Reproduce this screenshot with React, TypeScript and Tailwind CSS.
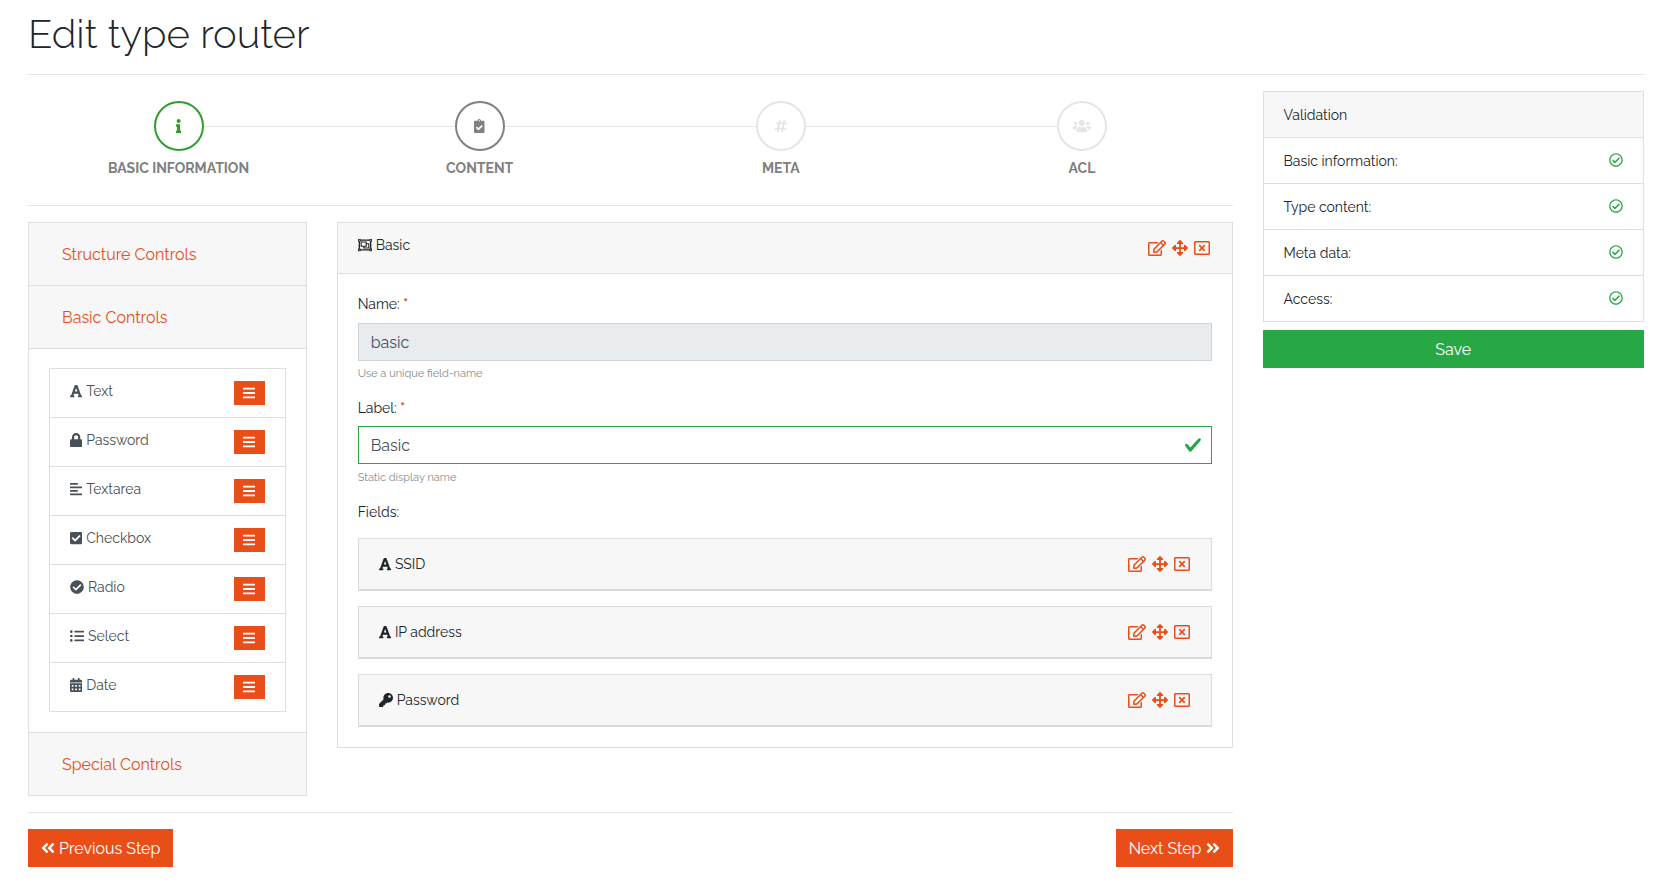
import React from "react";
import type { IconType } from "react-icons";
import {
  FaAlignLeft,
  FaAngleDoubleLeft,
  FaAngleDoubleRight,
  FaArrowsAlt,
  FaBars,
  FaCalendarAlt,
  FaCheckCircle,
  FaCheckSquare,
  FaClipboardCheck,
  FaFont,
  FaHashtag,
  FaInfo,
  FaKey,
  FaListUl,
  FaLock,
  FaRegCheckCircle,
  FaRegEdit,
  FaRegObjectGroup,
  FaRegWindowClose,
  FaUsers,
} from "react-icons/fa";

const steps: { label: string; icon: IconType; tone: string }[] = [
  { label: "Basic information", icon: FaInfo, tone: "border-[#2f9e2f] text-[#2f9e2f]" },
  { label: "Content", icon: FaClipboardCheck, tone: "border-[#808080] text-[#808080]" },
  { label: "Meta", icon: FaHashtag, tone: "border-[#e5e5e5] text-[#e5e5e5]" },
  { label: "ACL", icon: FaUsers, tone: "border-[#e5e5e5] text-[#e5e5e5]" },
];

const basicControls: { label: string; icon: IconType }[] = [
  { label: "Text", icon: FaFont },
  { label: "Password", icon: FaLock },
  { label: "Textarea", icon: FaAlignLeft },
  { label: "Checkbox", icon: FaCheckSquare },
  { label: "Radio", icon: FaCheckCircle },
  { label: "Select", icon: FaListUl },
  { label: "Date", icon: FaCalendarAlt },
];

const fields: { label: string; icon: IconType }[] = [
  { label: "SSID", icon: FaFont },
  { label: "IP address", icon: FaFont },
  { label: "Password", icon: FaKey },
];

const checks = ["Basic information:", "Type content:", "Meta data:", "Access:"];

/* size="auto" leaves the view box to set the ratio, so width follows the glyph. */
function Glyph({ icon: Icon, large = false }: { icon: IconType; large?: boolean }) {
  return (
    <Icon
      size="auto"
      className={large ? "h-4 w-auto shrink-0" : "h-[14px] w-auto shrink-0"}
      aria-hidden="true"
    />
  );
}

function Actions({ name }: { name: string }) {
  return (
    <div className="flex items-center gap-[6px] text-[#e94e18]">
      <button type="button" aria-label={`Edit ${name}`}>
        <Glyph icon={FaRegEdit} large />
      </button>
      <button type="button" aria-label={`Move ${name}`}>
        <Glyph icon={FaArrowsAlt} large />
      </button>
      <button type="button" aria-label={`Remove ${name}`}>
        <Glyph icon={FaRegWindowClose} large />
      </button>
    </div>
  );
}

function AccordionHeader({ label, open = false }: { label: string; open?: boolean }) {
  return (
    <h2 className="bg-[#f7f7f7] px-5 py-3">
      <button
        type="button"
        aria-expanded={open}
        className="px-[13px] pt-2 pb-[6px] text-[16px] leading-6 text-[#e94e18]"
      >
        {label}
      </button>
    </h2>
  );
}

function Stepper() {
  return (
    <ol className="flex border-b border-[#e5e5e5] pt-[10px] pb-[27px]">
      {steps.map(({ label, icon, tone }, i) => (
        <li key={label} className="flex-1">
          <div className="flex items-center">
            <span className={i === 0 ? "h-px flex-1" : "h-px flex-1 bg-[#e5e5e5]"} />
            <button
              type="button"
              aria-label={label}
              className={`flex size-[50px] items-center justify-center rounded-full border-2 ${tone}`}
            >
              <Glyph icon={icon} />
            </button>
            <span
              className={i === steps.length - 1 ? "h-px flex-1" : "h-px flex-1 bg-[#e5e5e5]"}
            />
          </div>
          <p className="mt-[7px] text-center text-[14px] leading-5 font-bold text-[#808080] uppercase">
            {label}
          </p>
        </li>
      ))}
    </ol>
  );
}

function ControlsPanel() {
  return (
    <section className="col-span-3 self-start divide-y divide-[#dfdfdf] border border-[#dfdfdf]">
      <AccordionHeader label="Structure Controls" />
      <AccordionHeader label="Basic Controls" open />
      <div className="p-5 pt-[19px]">
        <ul className="divide-y divide-[#dfdfdf] border border-[#dfdfdf] text-[#495057]">
          {basicControls.map(({ label, icon }) => (
            <li key={label} className="flex items-start justify-between px-5 py-3">
              <span className="flex items-center gap-1 leading-5">
                <Glyph icon={icon} />
                {label}
              </span>
              <button
                type="button"
                aria-label={`Drag ${label}`}
                className="flex h-6 w-[31px] items-center justify-center bg-[#e94e18] text-white"
              >
                <Glyph icon={FaBars} />
              </button>
            </li>
          ))}
        </ul>
      </div>
      <AccordionHeader label="Special Controls" />
    </section>
  );
}

function Editor() {
  return (
    <section className="col-span-9 self-start border border-[#dfdfdf]">
      <header className="flex items-start justify-between border-b border-[#dfdfdf] bg-[#f7f7f7] py-3 pr-[22px] pl-5">
        <h2 className="flex items-center gap-1 leading-5">
          <Glyph icon={FaRegObjectGroup} />
          Basic
        </h2>
        <div className="flex h-[26px] items-center">
          <Actions name="Basic" />
        </div>
      </header>
      <div className="p-5">
        <label htmlFor="name" className="mb-2 block leading-[21px]">
          Name: <span className="font-bold text-[#e94e18]">*</span>
        </label>
        <input
          id="name"
          readOnly
          defaultValue="basic"
          className="block h-[38px] w-full border border-[#ced4da] bg-[#e9ecef] px-3 text-[16px] text-[#495057] outline-none"
        />
        <p className="mt-[5px] mb-4 text-[11px] leading-4 text-[#868e96]">
          Use a unique field-name
        </p>

        <label htmlFor="label" className="mb-[7px] block leading-[21px]">
          Label: <span className="font-bold text-[#e94e18]">*</span>
        </label>
        <div className="relative">
          <input
            id="label"
            defaultValue="Basic"
            className="block h-[38px] w-full border border-[#28a745] bg-white pr-10 pl-3 text-[16px] text-[#495057] outline-none"
          />
          <svg
            viewBox="0 0 8 8"
            className="absolute top-[10px] right-[10px] size-[18px]"
            aria-hidden="true"
          >
            <path
              fill="#28a745"
              d="M2.3 6.73L.6 4.53c-.4-1.04.46-1.4 1.1-.8l1.1 1.4 3.4-3.8c.6-.63 1.6-.27 1.2.7l-4 4.6c-.43.5-.8.4-1.1.1z"
            />
          </svg>
        </div>
        <p className="mt-[6px] mb-4 text-[11px] leading-4 text-[#868e96]">Static display name</p>

        <h3 className="mb-[15px] leading-[21px]">Fields:</h3>
        <ul className="flex flex-col gap-[15px]">
          {fields.map(({ label, icon }) => (
            <li
              key={label}
              className="flex h-[53px] items-center justify-between border border-b-2 border-[#dadada] bg-[#f7f7f7] pr-[21px] pl-5"
            >
              <span className="flex items-center gap-1 leading-5">
                <Glyph icon={icon} />
                {label}
              </span>
              <Actions name={label} />
            </li>
          ))}
        </ul>
      </div>
    </section>
  );
}

export default function App() {
  return (
    <main className="bg-white pt-[10px] pr-[27px] pb-4 pl-7 font-['Raleway','Lato',sans-serif] text-[14px] text-[#212529]">
      <h1 className="border-b border-[#e5e5e5] pb-4 text-[40px] leading-[48px] font-light">
        Edit type router
      </h1>
      <div className="mt-4 grid grid-cols-12 gap-x-[30px]">
        <div className="col-span-9">
          <Stepper />
          <div className="mt-4 grid grid-cols-12 gap-x-[30px]">
            <ControlsPanel />
            <Editor />
          </div>
          <nav className="mt-4 flex justify-between border-t border-[#e5e5e5] pt-4 text-[16px] text-white">
            <button
              type="button"
              className="flex h-[38px] items-center gap-1 bg-[#e94e18] px-[13px]"
            >
              <Glyph icon={FaAngleDoubleLeft} large />
              <span className="pt-[2px]">Previous Step</span>
            </button>
            <button
              type="button"
              className="flex h-[38px] items-center gap-1 bg-[#e94e18] px-[13px]"
            >
              <span className="pt-[2px]">Next Step</span>
              <Glyph icon={FaAngleDoubleRight} large />
            </button>
          </nav>
        </div>
        <aside className="col-span-3">
          <div className="divide-y divide-[#dfdfdf] border border-[#dfdfdf]">
            <h2 className="bg-[#f7f7f7] px-5 pt-[13px] pb-[11px] leading-[21px]">Validation</h2>
            {checks.map((label) => (
              <div
                key={label}
                className="flex items-start justify-between px-5 pt-[13px] pb-[11px]"
              >
                <span className="leading-[21px]">{label}</span>
                <span className="flex h-[18px] items-center text-[#28a745]">
                  <Glyph icon={FaRegCheckCircle} />
                </span>
              </div>
            ))}
          </div>
          <button
            type="button"
            className="mt-2 h-[38px] w-full bg-[#28a745] pt-[2px] text-[16px] text-white"
          >
            Save
          </button>
        </aside>
      </div>
    </main>
  );
}
